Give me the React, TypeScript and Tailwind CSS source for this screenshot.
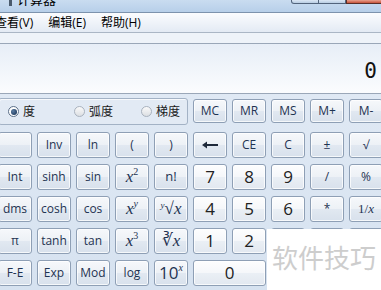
import type { ReactNode } from 'react';

const face =
  'bg-[linear-gradient(#f6f8fb_0%,#edf1f6_48%,#e1e8f1_52%,#d8e1ec_100%)]';
const digitFace =
  'bg-[linear-gradient(#fdfdfe_0%,#f5f7fa_48%,#eaeff5_52%,#e2e8f0_100%)]';

function Key({
  children,
  digit,
  className = '',
}: {
  children?: ReactNode;
  digit?: boolean;
  className?: string;
}) {
  return (
    <div
      className={`flex items-center justify-center rounded-[3px] border border-[#8e9fb5] shadow-[inset_0_0_0_1px_rgba(255,255,255,0.75)] ${
        digit ? digitFace + ' text-[17px] text-[#222]' : face + ' text-[12px] text-[#1f3352]'
      } ${className}`}
    >
      {children}
    </div>
  );
}

function Radio({ checked, label }: { checked?: boolean; label: string }) {
  return (
    <div className="flex items-center gap-[4px]">
      {checked ? (
        <span className="flex h-[11px] w-[11px] items-center justify-center rounded-full border border-[#5b6f88] bg-white">
          <span className="h-[6px] w-[6px] rounded-full bg-[radial-gradient(circle_at_35%_35%,#5c7da3,#0f2a4c)]" />
        </span>
      ) : (
        <span className="h-[11px] w-[11px] rounded-full border border-[#a9b2be] bg-[linear-gradient(#fafafa,#dcdfe3)]" />
      )}
      <span className="text-[12px] text-[#1b1b1b]">{label}</span>
    </div>
  );
}

const X = ({ children }: { children: ReactNode }) => (
  <span className="font-['Liberation_Serif',serif] italic">{children}</span>
);

export default function App() {
  const serif = "font-['Liberation_Serif',serif] text-[17px] text-[#1f3352]";
  return (
    <div className="relative h-[290px] w-[381px] overflow-hidden bg-[linear-gradient(#e4ecf6,#d6e2f0)] font-['Open_Sans','Noto_Sans_CJK_SC',sans-serif]">
      {/* title bar */}
      <div className="flex h-[12px] items-start overflow-hidden bg-[linear-gradient(#c9dcf0,#b7cfe9)]">
        <div className="ml-[9px] -mt-[9px] flex items-center gap-[5px]">
          <span className="h-[14px] w-[3px] bg-[#4a5a6c]" />
          <span className="text-[13px] leading-[16px] text-black">计算器</span>
        </div>
        <div className="ml-auto flex h-[4px]">
          <span className="w-[28px] rounded-bl-[3px] border border-t-0 border-[#52647c] bg-[linear-gradient(#dbe7f4,#b9cde3)]" />
          <span className="w-[27px] border border-l-0 border-t-0 border-[#52647c] bg-[linear-gradient(#dbe7f4,#b9cde3)]" />
          <span className="w-[35px] border-b border-l border-[#5a2e26] bg-[linear-gradient(#e8a08c,#c7533b)]" />
        </div>
      </div>

      {/* menu bar */}
      <div className="flex h-[21px] items-center gap-[15px] border-t border-b border-t-[#7d93ad] border-b-[#aab6c5] bg-[linear-gradient(#fbfcfe,#e3eaf4)] text-[12px] text-black">
        <span className="-ml-[5px]">查看(V)</span>
        <span>编辑(E)</span>
        <span>帮助(H)</span>
      </div>

      {/* display */}
      <div className="h-[10px] bg-[#eef3f9]" />
      <div className="flex h-[51px] items-center justify-end border-t border-b border-[#9aa7b8] bg-[linear-gradient(#e7eef7,#fbfcfe)] pr-[4px] pt-[6px]">
        <span className="font-['DejaVu_Sans_Mono',monospace] text-[21px] text-[#111]">0</span>
      </div>

      {/* keypad */}
      <div className="-ml-[2px] mt-[4px] grid grid-cols-[repeat(10,34px)] gap-x-[5px] gap-y-[6px]">
        <div className="col-span-5 mb-[1px] flex h-[27px] items-center rounded-[3px] border border-[#a3b2c5] bg-[#e2eaf4] pl-[9px] shadow-[inset_1px_1px_0_#f7f9fc]">
          <div className="w-[66px]">
            <Radio checked label="度" />
          </div>
          <div className="w-[67px]">
            <Radio label="弧度" />
          </div>
          <Radio label="梯度" />
        </div>
        <Key className="mt-[1px] h-[24px] text-[11px]">MC</Key>
        <Key className="mt-[1px] h-[24px] text-[11px]">MR</Key>
        <Key className="mt-[1px] h-[24px] text-[11px]">MS</Key>
        <Key className="mt-[1px] h-[24px] text-[11px]">M+</Key>
        <Key className="mt-[1px] h-[24px] text-[11px]">M-</Key>

        {/* row 2 */}
        <Key className="h-[26px]" />
        <Key className="h-[26px]">Inv</Key>
        <Key className="h-[26px]">ln</Key>
        <Key className="h-[26px]">(</Key>
        <Key className="h-[26px]">)</Key>
        <Key className="h-[26px]">
          <svg width="18" height="8" viewBox="0 0 18 8">
            <path d="M1 4 L6 0.5 L6 3 L17 3 L17 5 L6 5 L6 7.5 Z" fill="#1f2a3a" />
          </svg>
        </Key>
        <Key className="h-[26px]">CE</Key>
        <Key className="h-[26px]">C</Key>
        <Key className="h-[26px]">±</Key>
        <Key className="h-[26px]">√</Key>

        {/* row 3 */}
        <Key className="h-[26px]">Int</Key>
        <Key className="h-[26px]">sinh</Key>
        <Key className="h-[26px]">sin</Key>
        <Key className={`h-[26px] ${serif}`}>
          <X>x</X>
          <sup className="text-[10px]">2</sup>
        </Key>
        <Key className="h-[26px] text-[13px]">n!</Key>
        <Key digit className="h-[26px]">7</Key>
        <Key digit className="h-[26px]">8</Key>
        <Key digit className="h-[26px]">9</Key>
        <Key className="h-[26px]">/</Key>
        <Key className="h-[26px]">%</Key>

        {/* row 4 */}
        <Key className="h-[26px]">dms</Key>
        <Key className="h-[26px]">cosh</Key>
        <Key className="h-[26px]">cos</Key>
        <Key className={`h-[26px] ${serif}`}>
          <X>x</X>
          <sup className="text-[10px] italic">y</sup>
        </Key>
        <Key className={`h-[26px] ${serif}`}>
          <sup className="text-[9px] italic">y</sup>√<X>x</X>
        </Key>
        <Key digit className="h-[26px]">4</Key>
        <Key digit className="h-[26px]">5</Key>
        <Key digit className="h-[26px]">6</Key>
        <Key className="h-[26px]">*</Key>
        <Key className="h-[26px] font-['Liberation_Serif',serif] text-[13px]">
          1/<X>x</X>
        </Key>

        {/* row 5 */}
        <Key className="h-[26px]">π</Key>
        <Key className="h-[26px]">tanh</Key>
        <Key className="h-[26px]">tan</Key>
        <Key className={`h-[26px] ${serif}`}>
          <X>x</X>
          <sup className="text-[10px]">3</sup>
        </Key>
        <Key className={`h-[26px] ${serif}`}>
          ∛<X>x</X>
        </Key>
        <Key digit className="h-[26px]">1</Key>
        <Key digit className="h-[26px]">2</Key>
        <Key digit className="h-[26px]" />
        <Key className="h-[26px]" />
        <Key className="h-[26px]" />

        {/* row 6 */}
        <Key className="h-[26px]">F-E</Key>
        <Key className="h-[26px]">Exp</Key>
        <Key className="h-[26px]">Mod</Key>
        <Key className="h-[26px]">log</Key>
        <Key className="h-[26px] text-[17px]">
          10
          <sup className="font-['Liberation_Serif',serif] text-[10px] italic">x</sup>
        </Key>
        <Key digit className="col-span-2 h-[26px] text-[14px]">0</Key>
        <Key className="h-[26px]" />
        <Key className="h-[26px]" />
      </div>

      {/* watermark */}
      <div className="absolute left-[267px] top-[229px] flex h-[61px] w-[114px] items-center justify-center bg-white pb-[6px]">
        <span className="text-[26px] leading-none text-[#cdcdcd] font-['Noto_Sans_CJK_SC',sans-serif]">软件技巧</span>
      </div>
    </div>
  );
}
